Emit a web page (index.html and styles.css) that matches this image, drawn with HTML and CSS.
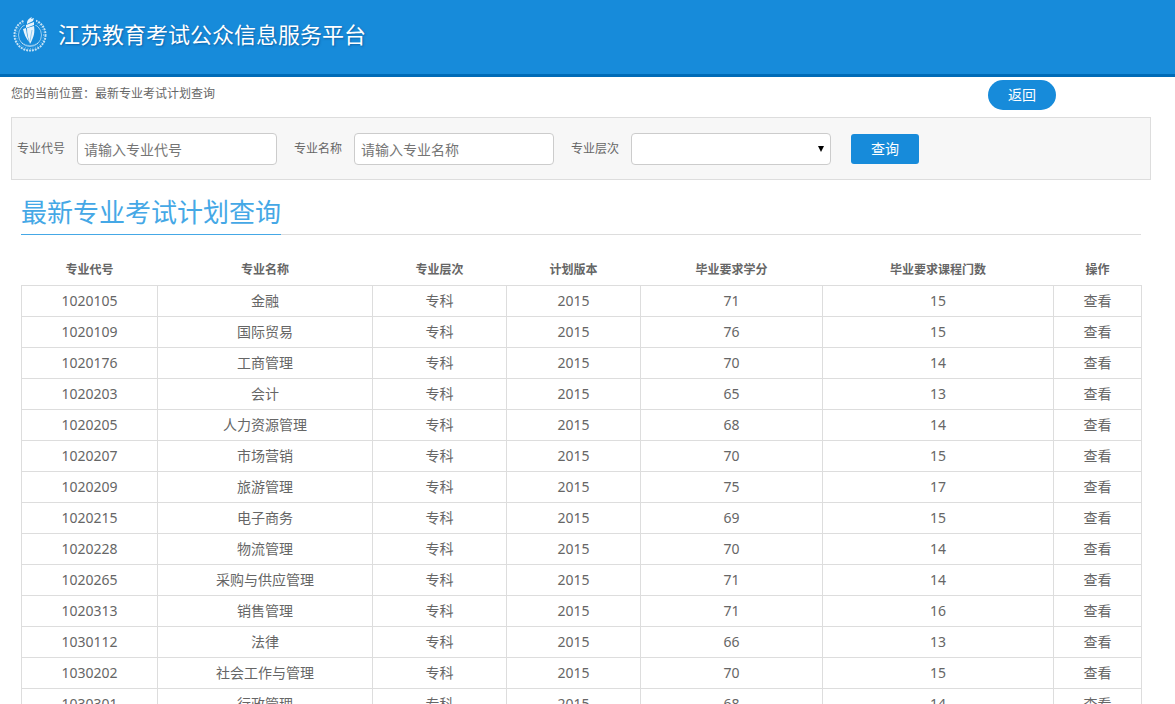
FILE: index.html
```html
<!DOCTYPE html>
<html lang="zh-CN">
<head>
  <meta charset="UTF-8" />
  <meta name="viewport" content="width=device-width, initial-scale=1.0" />
  <title>最新专业考试计划查询</title>
  <link rel="stylesheet" href="styles.css">
</head>
<body>
  <header class="header">
    <svg class="logo" viewBox="0 0 36 36" aria-hidden="true">
      <circle class="wreath" cx="18" cy="19" r="15.5" pathLength="100" />
      <circle class="wreath-inner" cx="18" cy="19" r="13.5" pathLength="100" />
      <circle class="ring" cx="18" cy="19" r="11.5" />
      <path class="gap" d="M12 0h12v9H12z" />
      <path class="torch" d="M15 6c1-3 3-4 5-5l-1 2 3-1-1 3-6 3z" />
      <path class="torch" d="M14 9l8-3v3l-8 3z" />
      <path class="torch" d="M11 13l3-1 1 7 2 7c-3-4-5-8-6-13z" />
      <path class="torch" d="M15 12l7-2c1 6 0 11-4 18-2-6-3-10-3-16z" />
      <path class="torch-line" d="M20 14l-2 11" />
      <path class="dots" d="M10 27q8 5 16 0" />
    </svg>
    <h1>江苏教育考试公众信息服务平台</h1>
  </header>

  <div class="container">
    <div class="location">
      <p>您的当前位置<span class="colon">：</span>最新专业考试计划查询</p>
      <button type="button" class="btn btn-back">返回</button>
    </div>

    <form class="search">
      <div class="field">
        <label for="code">专业代号</label>
        <input type="text" id="code" placeholder="请输入专业代号" />
      </div>
      <div class="field">
        <label for="name">专业名称</label>
        <input type="text" id="name" placeholder="请输入专业名称" />
      </div>
      <div class="field select-field">
        <label for="level">专业层次</label>
        <select id="level">
          <option value=""></option>
          <option value="1">专科</option>
          <option value="2">本科</option>
        </select>
      </div>
      <button type="button" class="btn">查询</button>
    </form>

    <main class="content">
      <div class="title"><h2>最新专业考试计划查询</h2></div>
      <table>
        <colgroup>
          <col class="col-code" />
          <col class="col-name" />
          <col class="col-level" />
          <col class="col-version" />
          <col class="col-credit" />
          <col class="col-course" />
          <col class="col-action" />
        </colgroup>
        <thead>
          <tr><th>专业代号</th><th>专业名称</th><th>专业层次</th><th>计划版本</th><th>毕业要求学分</th><th>毕业要求课程门数</th><th>操作</th></tr>
        </thead>
        <tbody>
          <tr><td>1020105</td><td>金融</td><td>专科</td><td>2015</td><td>71</td><td>15</td><td><a href="#">查看</a></td></tr>
          <tr><td>1020109</td><td>国际贸易</td><td>专科</td><td>2015</td><td>76</td><td>15</td><td><a href="#">查看</a></td></tr>
          <tr><td>1020176</td><td>工商管理</td><td>专科</td><td>2015</td><td>70</td><td>14</td><td><a href="#">查看</a></td></tr>
          <tr><td>1020203</td><td>会计</td><td>专科</td><td>2015</td><td>65</td><td>13</td><td><a href="#">查看</a></td></tr>
          <tr><td>1020205</td><td>人力资源管理</td><td>专科</td><td>2015</td><td>68</td><td>14</td><td><a href="#">查看</a></td></tr>
          <tr><td>1020207</td><td>市场营销</td><td>专科</td><td>2015</td><td>70</td><td>15</td><td><a href="#">查看</a></td></tr>
          <tr><td>1020209</td><td>旅游管理</td><td>专科</td><td>2015</td><td>75</td><td>17</td><td><a href="#">查看</a></td></tr>
          <tr><td>1020215</td><td>电子商务</td><td>专科</td><td>2015</td><td>69</td><td>15</td><td><a href="#">查看</a></td></tr>
          <tr><td>1020228</td><td>物流管理</td><td>专科</td><td>2015</td><td>70</td><td>14</td><td><a href="#">查看</a></td></tr>
          <tr><td>1020265</td><td>采购与供应管理</td><td>专科</td><td>2015</td><td>71</td><td>14</td><td><a href="#">查看</a></td></tr>
          <tr><td>1020313</td><td>销售管理</td><td>专科</td><td>2015</td><td>71</td><td>16</td><td><a href="#">查看</a></td></tr>
          <tr><td>1030112</td><td>法律</td><td>专科</td><td>2015</td><td>66</td><td>13</td><td><a href="#">查看</a></td></tr>
          <tr><td>1030202</td><td>社会工作与管理</td><td>专科</td><td>2015</td><td>70</td><td>15</td><td><a href="#">查看</a></td></tr>
          <tr><td>1030301</td><td>行政管理</td><td>专科</td><td>2015</td><td>68</td><td>14</td><td><a href="#">查看</a></td></tr>
        </tbody>
      </table>
    </main>
  </div>
</body>
</html>
```
FILE: styles.css
```css
* {
  box-sizing: border-box;
}
body {
  margin: 0;
  background: #fff;
  color: #666;
  font-family: "Noto Sans", "Noto Sans CJK SC", sans-serif;
  font-size: 12px;
  line-height: 18px;
}
h1, h2, p {
  margin: 0;
  font-weight: normal;
}
a {
  color: inherit;
  text-decoration: none;
}

/* header */
.header {
  display: flex;
  align-items: center;
  gap: 10px;
  padding: 15px 12px 21px;
  background: #178bda;
  border-bottom: 3px solid #006bb7;
  color: #fff;
}
.header h1 {
  font-size: 22px;
  line-height: 38px;
  text-shadow: 1px 1px 2px rgba(0, 60, 120, 0.5);
}
.logo {
  width: 36px;
  height: 36px;
  fill: none;
  stroke: #fff;
}
.wreath {
  stroke-width: 2;
  stroke-dasharray: 2 1;
  opacity: 0.75;
}
.wreath-inner {
  stroke-width: 1;
  stroke-dasharray: 1 2;
  opacity: 0.5;
}
.ring {
  stroke-width: 1;
  opacity: 0.55;
}
.gap {
  fill: #178bda;
  stroke: none;
}
.torch {
  fill: #fff;
  stroke: none;
  opacity: 0.9;
}
.torch-line {
  stroke: #178bda;
  opacity: 0.4;
}
.dots {
  stroke-dasharray: 1 1;
  opacity: 0.8;
}

.container {
  margin: 0 24px 0 11px;
}
.location {
  display: flex;
  justify-content: space-between;
  align-items: flex-start;
  height: 40px;
  padding: 3px 95px 0 0;
}
.location p {
  padding-top: 5px;
}
.colon {
  font-family: "Noto Sans CJK TC", sans-serif;
  line-height: 1;
}

/* buttons */
.btn {
  width: 68px;
  height: 30px;
  padding: 0 0 2px;
  border: none;
  border-radius: 3px;
  background: #178bda;
  color: #fff;
  font-family: inherit;
  font-size: 14px;
  cursor: pointer;
}
.btn:hover {
  background: #006bb7;
}
.btn-back {
  border-radius: 15px;
}

/* search form */
.search {
  display: flex;
  align-items: center;
  padding: 15px 5px 14px;
  background: #f7f7f7;
  border: 1px solid #ddd;
}
.field {
  display: flex;
  align-items: center;
  gap: 12px;
  margin-right: 17px;
}
.select-field {
  position: relative;
  margin-right: 20px;
}
.select-field::after {
  content: "";
  position: absolute;
  right: 7px;
  top: 13px;
  border: 3px solid transparent;
  border-top: 6px solid #000;
  border-bottom: 0;
  pointer-events: none;
}
.field input,
.field select {
  width: 200px;
  height: 32px;
  padding: 0 6px;
  border: 1px solid #ccc;
  border-radius: 4px;
  background: #fff;
  color: #666;
  font-family: inherit;
  font-size: 14px;
}
.field select {
  appearance: none;
}
.field input::placeholder {
  color: #757575;
}

/* plan list */
.content {
  padding: 10px 9px 20px 10px;
}
.title {
  display: flex;
  margin-right: 1px;
}
.title::after {
  content: "";
  flex: 1;
  border-bottom: 1px solid #ddd;
}
.title h2 {
  border-bottom: 1px solid #45a8e6;
  color: #45a8e6;
  font-size: 26px;
  line-height: 44px;
}
table {
  width: 100%;
  margin-top: 20px;
  border-collapse: collapse;
  table-layout: fixed;
  text-align: center;
}
th {
  height: 30px;
  padding: 0;
  font-weight: bold;
}
td {
  height: 31px;
  padding: 0;
  border: 1px solid #ddd;
  font-size: 14px;
}
.col-code {
  width: 136px;
}
.col-name {
  width: 215px;
}
.col-level,
.col-version {
  width: 134px;
}
.col-credit {
  width: 182px;
}
.col-course {
  width: 231px;
}
.col-action {
  width: 88px;
}
```
